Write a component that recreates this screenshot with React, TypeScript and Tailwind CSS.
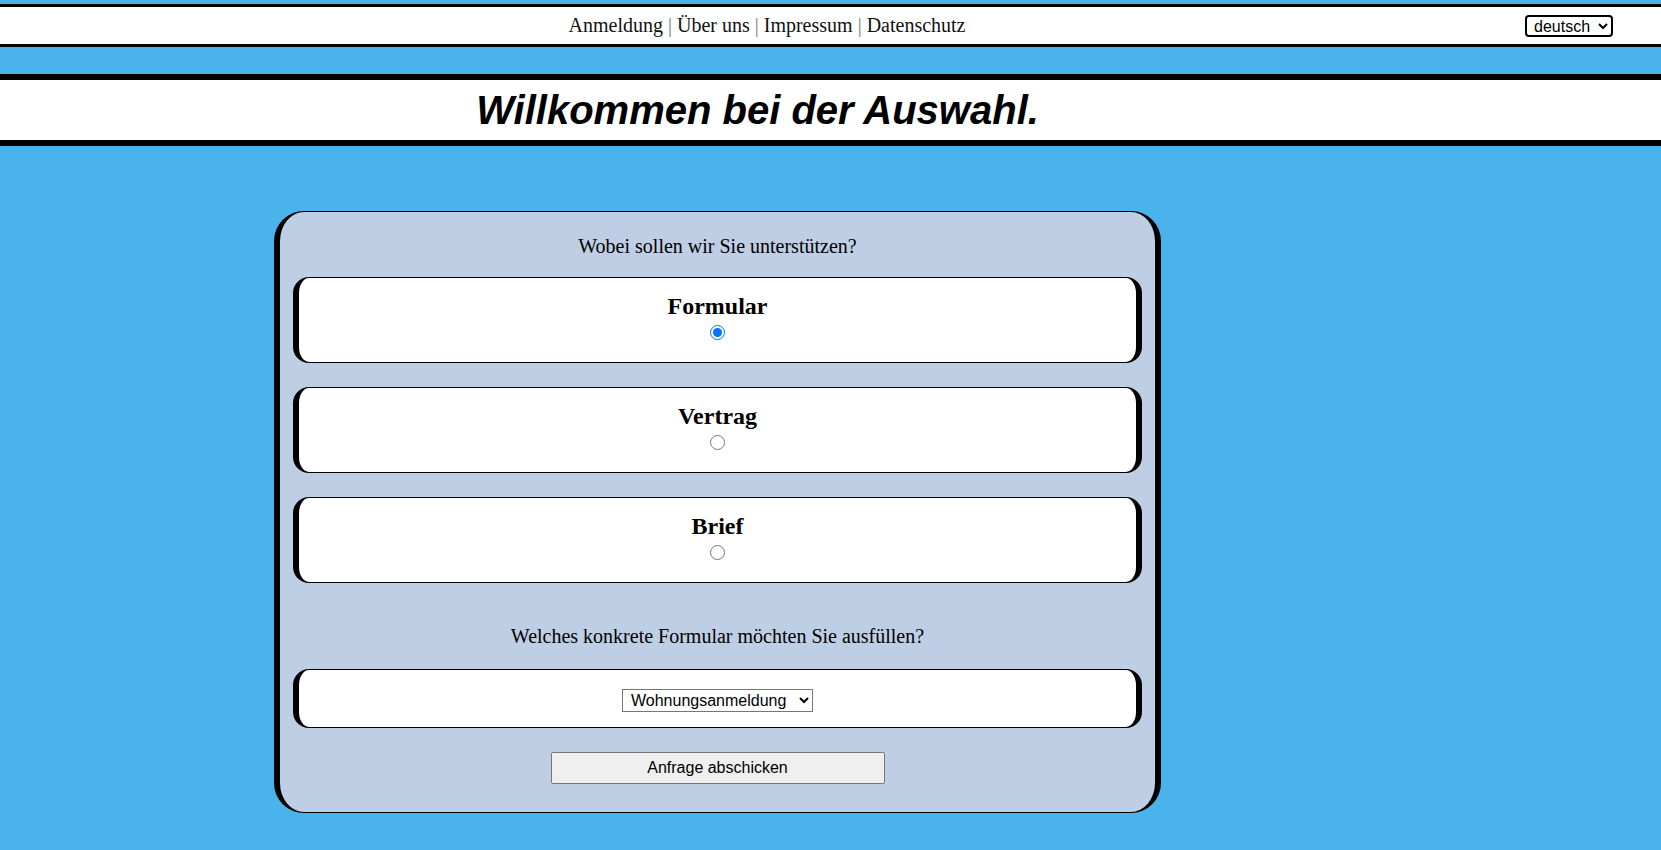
import { useState } from "react";

const serif = { fontFamily: '"Liberation Serif", "Times New Roman", serif' };
const sans = { fontFamily: '"Liberation Sans", Arial, sans-serif' };

const options = ["Formular", "Vertrag", "Brief"];

export default function App() {
  const [choice, setChoice] = useState("Formular");

  return (
    <div className="min-h-screen bg-[#4ab3ec] pt-[4px] pb-[36px]" style={serif}>
      {/* top nav */}
      <div className="flex h-[43px] items-center border-y-[3px] border-black bg-white">
        <nav className="flex-1 pl-[9px] text-center text-[20px] leading-[23px] text-[#111]">
          <a href="#">Anmeldung</a>
          <span className="text-[#777]"> | </span>
          <a href="#">Über uns</a>
          <span className="text-[#777]"> | </span>
          <a href="#">Impressum</a>
          <span className="text-[#777]"> | </span>
          <a href="#">Datenschutz</a>
        </nav>
        <select
          className="mr-[48px] h-[22px] w-[88px] rounded-[4px] border-2 border-black bg-white pl-[3px] text-[16px] leading-[18px] text-black"
          style={sans}
          defaultValue="de"
        >
          <option value="de">deutsch</option>
          <option value="en">english</option>
        </select>
      </div>

      {/* title */}
      <div className="mt-[27px] flex h-[72px] items-center justify-center border-y-[6px] border-black bg-white pr-[146px]">
        <h1 className="text-[40px] font-bold italic leading-[48px] text-black" style={sans}>
          Willkommen bei der Auswahl.
        </h1>
      </div>

      {/* card */}
      <div className="ml-[274px] mt-[65px] w-[887px] rounded-[30px] border-x-[6px] border-y border-black bg-[#becee4] px-[13px] pb-[28px] pt-[23px]">
        <p className="text-center text-[20px] leading-[23px] text-black">Wobei sollen wir Sie unterstützen?</p>

        <div className="mt-[19px] flex flex-col gap-[24px]">
          {options.map((o) => (
            <label
              key={o}
              className="flex h-[86px] cursor-pointer flex-col items-center rounded-[16px] border-x-[6px] border-y border-black bg-white pt-[14px]"
            >
              <span className="text-[24px] font-bold leading-[28px] text-black">{o}</span>
              <input
                type="radio"
                name="art"
                className="mt-[5px] h-[15px] w-[15px]"
                checked={choice === o}
                onChange={() => setChoice(o)}
              />
            </label>
          ))}
        </div>

        <p className="mt-[42px] text-center text-[20px] leading-[23px] text-black">
          Welches konkrete Formular möchten Sie ausfüllen?
        </p>

        <div className="mt-[21px] flex h-[59px] justify-center rounded-[16px] border-x-[6px] border-y border-black bg-white pt-[19px]">
          <select
            className="h-[23px] w-[191px] border border-[#767676] bg-white pl-[4px] text-[16px] leading-[18px] text-black"
            style={sans}
            defaultValue="wohnung"
          >
            <option value="wohnung">Wohnungsanmeldung</option>
            <option value="gewerbe">Gewerbeanmeldung</option>
          </select>
        </div>

        <div className="mt-[24px] flex justify-center">
          <button
            type="button"
            className="h-[32px] w-[334px] rounded-[2px] border border-[#767676] bg-[#efefef] text-[16px] text-black"
            style={sans}
          >
            Anfrage abschicken
          </button>
        </div>
      </div>
    </div>
  );
}
